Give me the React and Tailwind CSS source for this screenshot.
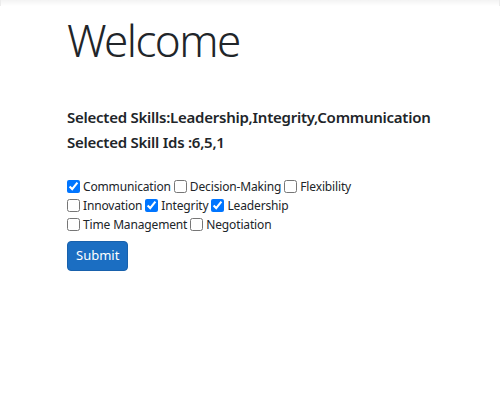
import { useState } from "react";

const SKILLS = [
  { id: 1, name: "Communication" },
  { id: 2, name: "Decision-Making" },
  { id: 3, name: "Flexibility" },
  { id: 4, name: "Innovation" },
  { id: 5, name: "Integrity" },
  { id: 6, name: "Leadership" },
  { id: 7, name: "Time Management" },
  { id: 8, name: "Negotiation" },
];

// filas como en la pantalla original
const ROWS = [[1, 2, 3], [4, 5, 6], [7, 8]];

export default function App() {
  // orden de seleccion: 6,5,1
  const [selected, setSelected] = useState([6, 5, 1]);

  const toggle = (id) => {
    setSelected((s) => (s.includes(id) ? s.filter((x) => x !== id) : [...s, id]));
  };

  const skill = (id) => SKILLS.find((s) => s.id === id);
  const names = selected.map((id) => skill(id).name);

  return (
    <div className="w-[500px] h-[414px] bg-white text-[#212529] overflow-hidden" style={{ fontFamily: '"Noto Sans", "Open Sans", sans-serif' }}>
      <div className="h-[6px] bg-gradient-to-b from-[#f3f3f3] to-white border-x border-[#ececec]"></div>
      <div className="pl-[67px] pr-4">
        <h1 className="text-[44px] font-light leading-none mt-[12px] tracking-[-1.6px]">Welcome</h1>

        <div className="mt-[43px] text-[15px] font-semibold leading-[25px] tracking-[-0.25px]">
          <div>Selected Skills:{names.join(",")}</div>
          <div>Selected Skill Ids :{selected.join(",")}</div>
        </div>

        <div className="mt-[22px] text-[12px] leading-[19px] tracking-[-0.15px]">
          {ROWS.map((row, r) => (
            <div key={r} className="flex items-center">
              {row.map((id) => (
                <label key={id} className="flex items-center mr-[3px]">
                  <input
                    type="checkbox"
                    checked={selected.includes(id)}
                    onChange={() => toggle(id)}
                    className="w-[13px] h-[13px] m-0 mr-[3px]"
                  />
                  <span>{skill(id).name}</span>
                </label>
              ))}
            </div>
          ))}
        </div>

        <button className="mt-[7px] h-[30px] px-[8px] rounded-[4px] bg-[#1b6ec2] border border-[#1861ac] text-white text-[13px]">Submit</button>
      </div>
    </div>
  );
}
